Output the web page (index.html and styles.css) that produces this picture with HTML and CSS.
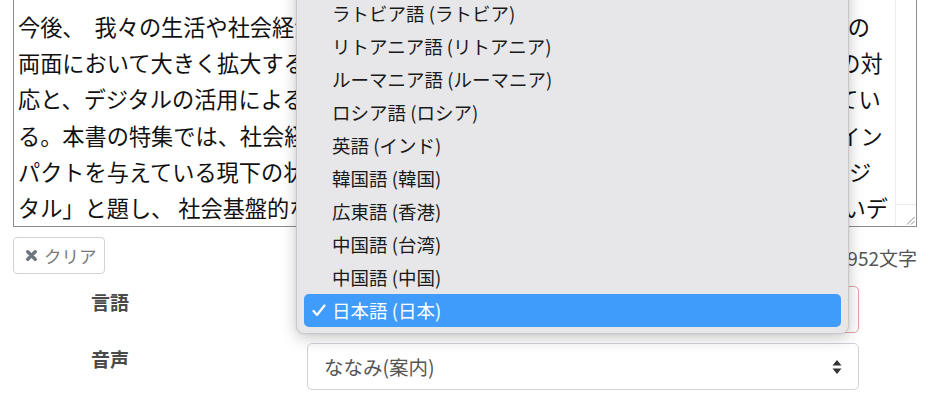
FILE: index.html
```html
<!DOCTYPE html>
<html lang="ja">
<head>
<meta charset="utf-8">
<title>読み上げ</title>
<link rel="stylesheet" href="styles.css">
</head>
<body>
<div class="page">
  <div class="editor">
    <textarea class="editor-input" wrap="off" readonly>今後、  我々の生活や社会経済活動においてデジタル化が進展し、そのデータ量と質の
両面において大きく拡大すると見込まれる。こうした変化の中では、新たな課題への対
応と、デジタルの活用による経済社会全体の変革を一体的に進めることが求められてい
る。本書の特集では、社会経済や国民の生活のあらゆる分野に対して極めて大きなイン
パクトを与えている現下の状況を踏まえ、「コロナ禍で浮き彫りになった諸課題とデジ
タル」と題し、 社会基盤的な役割を担うデジタル技術の現状と課題を整理し、新しいデ</textarea>
    <div class="editor-track">
      <div class="editor-corner">
        <svg class="grip" width="9" height="9" viewBox="0 0 9 9"><path d="M1 8.5 L8.5 1 M5 8.5 L8.5 5" stroke="#8a8a8a" stroke-width="1" fill="none"/></svg>
      </div>
    </div>
  </div>

  <div class="toolbar">
    <button class="btn-clear" type="button">
      <svg class="btn-clear-icon" width="11" height="11" viewBox="0 0 11 11"><path d="M1.8 1.8 L9.2 9.2 M9.2 1.8 L1.8 9.2" stroke="#6c757d" stroke-width="3.4" stroke-linecap="round"/></svg>
      <span>クリア</span>
    </button>
    <span class="count">1952文字</span>
  </div>

  <div class="form">
    <div class="form-row">
      <label class="form-label">言語</label>
      <div class="select-wrap">
        <div class="select select-invalid">
          <span>日本語 (日本)</span>
          <svg class="select-arrows" width="10" height="16" viewBox="0 0 10 16"><path d="M0.5 6.5 L5 1 L9.5 6.5 Z M0.5 9.5 L5 15 L9.5 9.5 Z" fill="#333"/></svg>
        </div>
        <ul class="menu">
          <li class="menu-item">マレー語 (マレーシア)</li>
          <li class="menu-item">ラトビア語 (ラトビア)</li>
          <li class="menu-item">リトアニア語 (リトアニア)</li>
          <li class="menu-item">ルーマニア語 (ルーマニア)</li>
          <li class="menu-item">ロシア語 (ロシア)</li>
          <li class="menu-item">英語 (インド)</li>
          <li class="menu-item">韓国語 (韓国)</li>
          <li class="menu-item">広東語 (香港)</li>
          <li class="menu-item">中国語 (台湾)</li>
          <li class="menu-item">中国語 (中国)</li>
          <li class="menu-item menu-item-selected">
            <svg class="check" width="14" height="13" viewBox="0 0 14 13"><path d="M1.5 7 L5 11 L12.5 1.5" stroke="#fff" stroke-width="2.2" fill="none" stroke-linecap="round" stroke-linejoin="round"/></svg>
            日本語 (日本)
          </li>
        </ul>
      </div>
    </div>
    <div class="form-row">
      <label class="form-label">音声</label>
      <div class="select-wrap">
        <div class="select">
          <span>ななみ(案内)</span>
          <svg class="select-arrows" width="10" height="16" viewBox="0 0 10 16"><path d="M0.5 6.5 L5 1 L9.5 6.5 Z M0.5 9.5 L5 15 L9.5 9.5 Z" fill="#333"/></svg>
        </div>
      </div>
    </div>
  </div>
</div>
</body>
</html>
```

FILE: styles.css
```css
* { box-sizing: border-box; }

html, body {
  margin: 0;
  padding: 0;
  background: #fff;
  overflow: hidden;
}

body {
  font-family: "Noto Sans CJK JP", "Noto Sans", sans-serif;
  color: #212529;
}

.page {
  padding: 0 13px;
}

/* ---------- editor ---------- */
.editor {
  display: flex;
  height: 228px;
  margin-top: -1px;
  border: 1px solid #8c8c8c;
  background: #fff;
}

.editor-input {
  flex: 1;
  min-width: 0;
  margin: 0;
  padding: 8px 4px 2px 4px;
  border: none;
  outline: none;
  resize: none;
  overflow: hidden;
  white-space: pre;
  font-family: "Noto Sans CJK JP", "Noto Sans", sans-serif;
  font-size: 22.2px;
  line-height: 36.2px;
  color: #111;
  background: #fff;
}

.editor-track {
  width: 21px;
  border-left: 1px solid #ececec;
  display: flex;
  flex-direction: column;
  justify-content: flex-end;
}

.editor-corner {
  height: 22px;
  border-top: 1px solid #ececec;
  display: flex;
  align-items: flex-end;
  justify-content: flex-end;
  padding: 0 1px 1px 0;
}

/* ---------- toolbar ---------- */
.toolbar {
  display: flex;
  align-items: center;
  justify-content: space-between;
  margin-top: 10px;
}

.btn-clear {
  display: inline-flex;
  align-items: center;
  gap: 7px;
  height: 37px;
  width: 92px;
  padding: 0 0 0 12px;
  border: 1px solid #d3d3d3;
  border-radius: 4px;
  background: #fff;
  font-family: "Noto Sans CJK JP", "Noto Sans", sans-serif;
  font-size: 17.5px;
  color: #7a7a7a;
}

.count {
  font-size: 19px;
  color: #555;
  margin-top: 3px;
}

/* ---------- form ---------- */
.form {
  margin-top: 12px;
  display: flex;
  flex-direction: column;
  gap: 10px;
}

.form-row {
  display: grid;
  grid-template-columns: 294px 552px;
  align-items: start;
}

.form-label {
  padding: 2px 0 0 78px;
  font-size: 19px;
  line-height: 28px;
  font-weight: 700;
  color: #4a4a4a;
}

.select-wrap {
  position: relative;
}

.select {
  display: flex;
  align-items: center;
  justify-content: space-between;
  height: 47px;
  padding: 0 16px 0 16px;
  border: 1px solid #ced4da;
  border-radius: 5px;
  background: #fff;
  font-size: 19.5px;
  color: #555;
}

.select-invalid {
  border-color: #e6a3a3;
}

/* ---------- native popup menu ---------- */
.menu {
  position: absolute;
  left: -11px;
  bottom: -1px;
  width: 553px;
  margin: 0;
  padding: 7px 0 6px 0;
  list-style: none;
  background: #e7e7e9;
  border: 1px solid #c9c9cc;
  border-radius: 8px;
  box-shadow: 0 4px 16px rgba(0, 0, 0, 0.22), 0 0 3px rgba(0, 0, 0, 0.08);
  z-index: 10;
}

.menu-item {
  position: relative;
  height: 33px;
  line-height: 33px;
  margin: 0 7px;
  padding-left: 28px;
  border-radius: 5px;
  font-size: 18.5px;
  color: #1a1a1a;
  white-space: nowrap;
}

.menu-item-selected {
  background: #409cfb;
  color: #fff;
}

.check {
  position: absolute;
  left: 8px;
  top: 10px;
}
```
